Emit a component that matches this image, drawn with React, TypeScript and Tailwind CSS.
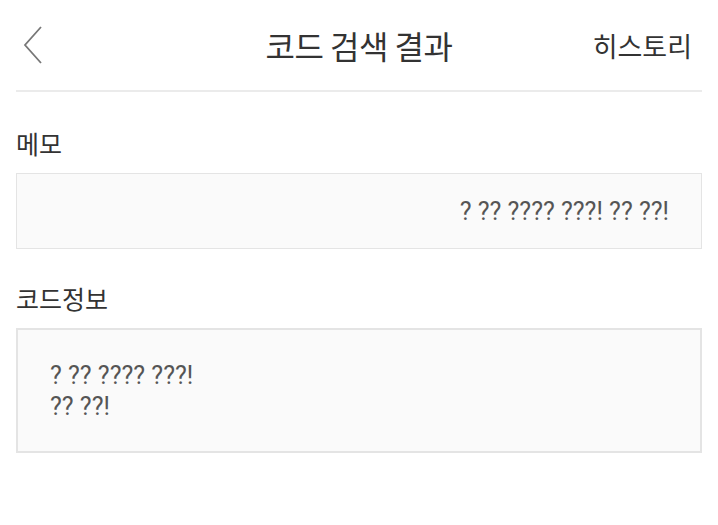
import React from 'react';

const font = { fontFamily: '"Noto Sans CJK KR", "Noto Sans", sans-serif' };

const App: React.FC = () => {
  return (
    <div className="min-h-screen bg-white text-[#333]" style={font}>
      <header className="mx-4 h-[92px] border-b-2 border-[#ebebeb] flex items-center justify-between relative">
        <button className="w-[40px] h-[50px] flex items-center justify-start pl-[6px]">
          <svg width="22" height="40" viewBox="0 0 22 40" fill="none">
            <path d="M19 2 L3 20 L19 38" stroke="#777" strokeWidth="1.8" />
          </svg>
        </button>
        <h1 className="absolute left-1/2 -translate-x-1/2 text-[32px] tracking-[-0.5px] text-[#333] leading-none">코드 검색 결과</h1>
        <span className="text-[27px] text-[#333] leading-none pr-[10px]">히스토리</span>
      </header>

      <main className="px-4">
        <section className="pt-[36px]">
          <h2 className="text-[25px] leading-[30px] text-[#333]">메모</h2>
          <div className="mt-[15px] h-[76px] border border-[#e4e4e4] bg-[#fafafa] flex items-center justify-end pr-[32px]">
            <p className="font-['Roboto',sans-serif] text-[25px] text-[#555] leading-none">? ?? ???? ???! ?? ??!</p>
          </div>
        </section>

        <section className="pt-[34px]">
          <h2 className="text-[25px] leading-[30px] text-[#333]">코드정보</h2>
          <div className="mt-[15px] h-[125px] border-2 border-[#e4e4e4] bg-[#fafafa] pl-[32px] pt-[30px]">
            <p className="font-['Roboto',sans-serif] text-[25px] text-[#555] leading-[31px]">? ?? ???? ???!<br />?? ??!</p>
          </div>
        </section>
      </main>
    </div>
  );
};

export default App;
